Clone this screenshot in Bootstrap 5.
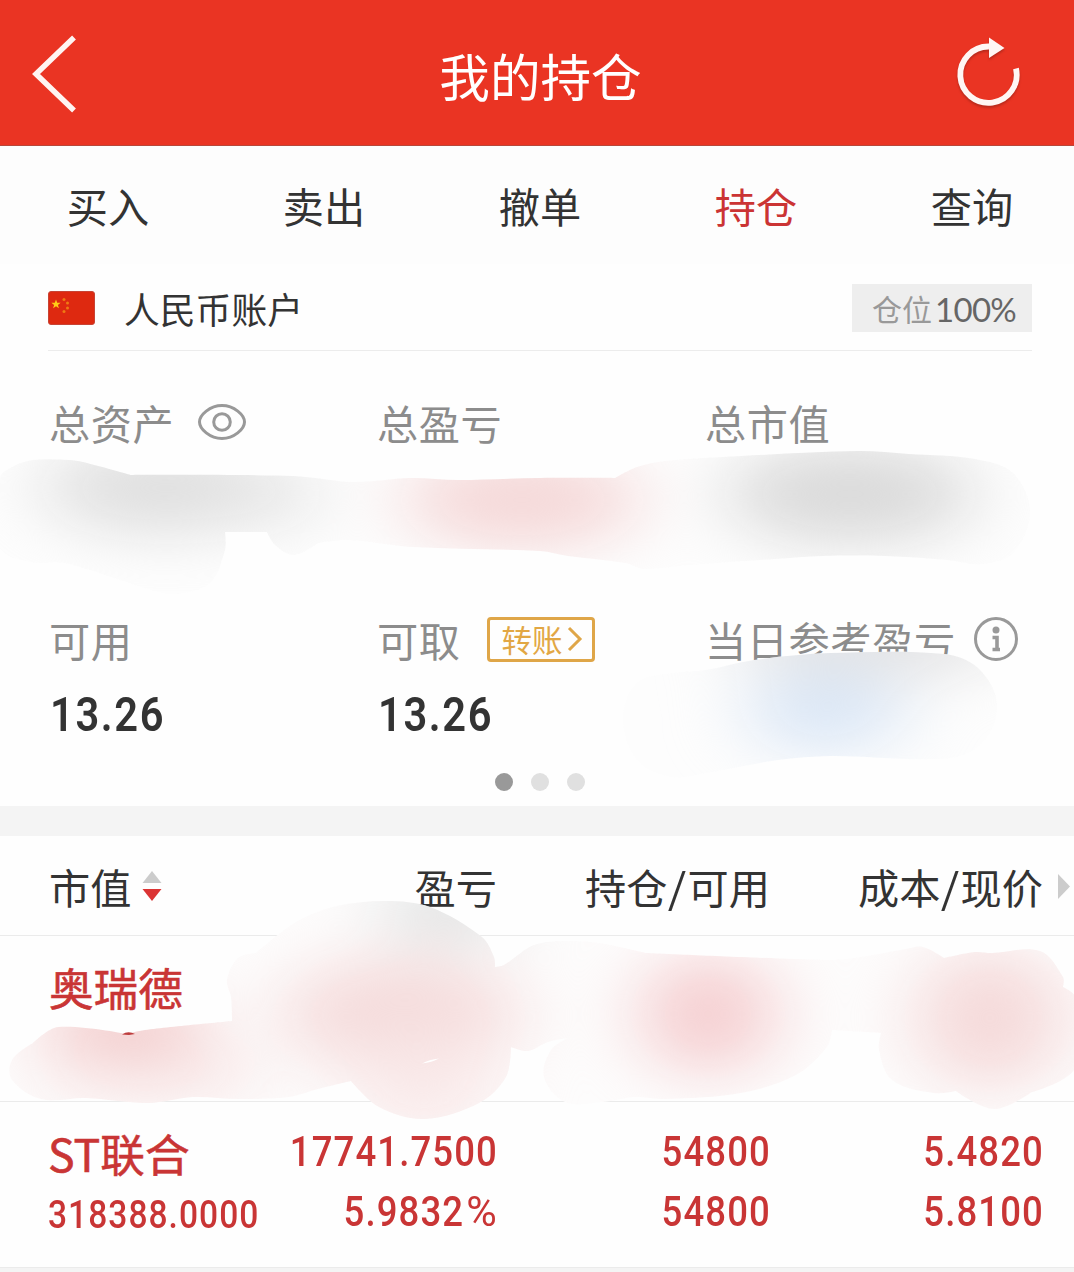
<!DOCTYPE html>
<html lang="zh-CN">
<head>
<meta charset="utf-8">
<meta name="viewport" content="width=device-width, initial-scale=1">
<title>我的持仓</title>
<link href="https://cdn.jsdelivr.net/npm/bootstrap@5.3.0/dist/css/bootstrap.min.css" rel="stylesheet">
<style>
body{font-family:"Noto Sans CJK SC","Noto Sans",sans-serif;background:#fefefe;color:#333;font-size:41.2px;line-height:60px;height:1272px;overflow:hidden}
.topbar{height:146px;background:#ea3423;border-bottom:1px solid #b8473a;padding:0 32px}
.topbar h1{font-size:50.6px;line-height:70px;font-weight:400;padding-left:47px;padding-top:5px}
.tabs{height:118px;background:#fdfdfd;padding-top:29px}
.tabs a{width:216px;flex:none;text-align:center;color:#333;text-decoration:none;padding:0;font-size:41.2px;line-height:60px}
.tabs a.active{color:#cb3434}
.acct{margin:0 42px 0 48px;height:87px;border-bottom:1px solid #ececec;padding-top:1px}
.acct-name{font-size:35.8px;margin-left:29px}
.posratio{background:#eee;width:180px;height:48px;color:#999;font-size:30px;line-height:48px;padding-left:20px}
.posratio b{font:400 33px/50px Lato,sans-serif;color:#666;margin-left:3px;letter-spacing:-.7px}
.assets{margin-left:49px;height:455px;color:#8c8c8c;letter-spacing:.6px}
.cell{width:328px;flex:none}
.cells{height:218px;padding-top:41px}
.cells:nth-child(2){padding-top:40px}
.din{font-family:Roboto,sans-serif;font-weight:500;display:block;white-space:nowrap;transform:scaleX(.85);letter-spacing:1.3px}
.din u{text-decoration:none;font-weight:400;display:inline-block;transform:scaleX(1.14);margin:0 2px 0 5px}
.cash{font-size:49px;color:#333;transform-origin:left;letter-spacing:1.9px;margin-left:1px;margin-top:16px;font-weight:600}
.transfer{width:108px;height:45px;border:3px solid #dfa648;border-radius:4px;color:#e2a744;font-size:30.5px;line-height:39px;letter-spacing:0;margin-left:26px;padding-left:12px}
.dots{margin-top:-14px;margin-right:48px;padding-left:5px}
.dots i{width:18px;height:18px;border-radius:50%;background:#e0e0e0;margin:0 9px}
.dots i:first-child{background:#999}
.band{height:30px;background:#f4f4f4}
.grid4{display:grid;grid-template-columns:230px 219px 273px 273px;padding-left:48px;text-align:right}
.thead{height:100px;border-bottom:1px solid #ebebeb;padding-top:20px;line-height:60px}
.thead s{text-decoration:none;display:inline-block;transform:scale(1.15,1);margin:0 2px}
.hold{height:166px;border-bottom:1px solid #ebebeb;color:#c93535}
.hold .name{font-size:44.6px;text-align:left;line-height:60px;-webkit-text-stroke:.6px #c93535;white-space:nowrap}
.nums{font-size:43px;line-height:60px}
.nums .din{transform-origin:right;margin:0 -1px 0 -60px}
.nums .din.mv{font-size:39.5px;transform-origin:left;letter-spacing:1.2px;line-height:56px;margin:4px 0 0}
.smudge{position:absolute;left:0;top:0;pointer-events:none}
</style>
</head>
<body class="position-relative">
<header class="topbar d-flex align-items-center justify-content-between text-white">
  <svg width="46" height="80" viewBox="0 0 46 80" fill="none" stroke="#fff4f2" stroke-width="5.500"><path d="M42 4.500 4 41l38 36.500"/></svg>
  <h1 class="mb-0">我的持仓</h1>
  <svg width="86" height="80" viewBox="0 0 86 80" class="overflow-visible"><g style="filter:drop-shadow(0 2px 1px #9d2418aa)"><path d="M33 13.500A28.200 28.200 0 1 0 60 35.500" fill="none" stroke="#fff6f4" stroke-width="5.800"/><path d="M33 4.500 48.500 15 33 25z" fill="#fff6f4"/></g></svg>
</header>
<nav class="tabs nav flex-nowrap overflow-hidden">
  <a>买入</a><a>卖出</a><a>撤单</a><a class="active">持仓</a><a>查询</a>
</nav>
<section class="acct d-flex align-items-center">
  <svg width="47" height="34" viewBox="0 0 47 34"><rect x=".5" y=".5" width="46" height="33" rx="2.500" fill="#de2910" stroke="#c74435"/><path d="m8 8.500 1.200 3.300h3.400l-2.700 2.100 1 3.300L8 15.200l-2.900 2 1-3.300-2.700-2.100h3.400z" fill="#ffcd16"/><g fill="#ef7a13"><circle cx="16" cy="8.500" r="1.500"/><circle cx="19.500" cy="12" r="1.500"/><circle cx="19.500" cy="17" r="1.500"/><circle cx="16" cy="20.500" r="1.500"/></g></svg>
  <span class="acct-name">人民币账户</span>
  <div class="posratio ms-auto d-flex">仓位<b>100%</b></div>
</section>
<section class="assets">
  <div class="cells d-flex">
    <div class="cell d-flex align-items-center align-self-start">总资产
      <svg style="margin-left:23px" width="50" height="38" viewBox="0 0 50 38" fill="none" stroke="#999" stroke-width="3"><path d="M2.500 19C2.500 12 13 2.500 25 2.500S47.500 12 47.500 19C47.500 26 37 35.500 25 35.500S2.500 26 2.500 19z"/><circle cx="25" cy="19" r="8.300"/></svg>
    </div>
    <div class="cell">总盈亏</div><div class="cell">总市值</div>
  </div>
  <div class="cells d-flex">
    <div class="cell">可用<div class="din cash">13.26</div></div>
    <div class="cell"><div class="d-flex align-items-center">可取<span class="transfer d-flex align-items-center">转账<svg class="ms-1" width="16" height="26" viewBox="0 0 16 26" fill="none" stroke="#dfa648" stroke-width="3"><path d="m2 2 11 11L2 24"/></svg></span></div><div class="din cash">13.26</div></div>
    <div class="cell d-flex align-self-start align-items-center">当日参考盈亏
      <svg class="flex-shrink-0" style="margin-left:17px" width="46" height="46" viewBox="0 0 46 46"><circle cx="23" cy="23" r="20.500" fill="none" stroke="#999" stroke-width="3"/><circle cx="23" cy="14" r="3.500" fill="#999"/><path d="M19.500 21.500h4.500v12M19.500 33.500h7.500" fill="none" stroke="#999" stroke-width="3.600"/></svg>
    </div>
  </div>
  <div class="dots d-flex justify-content-center"><i></i><i></i><i></i></div>
</section>
<div class="band"></div>
<section>
  <div class="grid4 thead position-relative">
    <div class="text-start d-flex align-items-center" style="height:60px;padding-left:1px">市值<svg style="margin-left:11px" width="20" height="32" viewBox="0 0 20 32"><path d="m10 1 9.500 12H.5z" fill="#ccc"/><path d="m10 31 9.500-12H.5z" fill="#db3434"/></svg></div>
    <div>盈亏</div><div>持仓<s>/</s>可用</div><div>成本<s>/</s>现价</div>
    <svg class="position-absolute" style="right:4px;top:38px" width="12" height="25" viewBox="0 0 12 25"><path d="M0 0 12 12.500 0 25z" fill="#ccc"/></svg>
  </div>
  <div class="grid4 hold"><div class="name" style="padding-top:21px;padding-left:1px">奥瑞德</div></div>
  <div class="grid4 hold nums" style="padding-top:20px">
    <div class="text-start"><div class="name" style="padding-top:1px">ST联合</div><div class="din mv">318388.0000</div></div>
    <div style="margin-top:-1px"><div class="din">17741.7500</div><div class="din">5.9832<u>%</u></div></div>
    <div style="margin-top:-1px"><div class="din">54800</div><div class="din">54800</div></div>
    <div style="margin-top:-1px"><div class="din">5.4820</div><div class="din">5.8100</div></div>
  </div>
  <div class="band"></div>
</section>

<svg class="smudge" width="1074" height="1272" viewBox="0 0 1074 1272">
  <defs>
    <filter id="soft" x="-100%" y="-150%" width="300%" height="400%" color-interpolation-filters="sRGB"><feGaussianBlur stdDeviation="38 28"/></filter>
    <clipPath id="ca"><path data-blob="a"/></clipPath>
    <clipPath id="cb"><path data-blob="b"/></clipPath>
    <clipPath id="cc"><path data-blob="c"/></clipPath>
  </defs>
  <g clip-path="url(#ca)"><rect y="440" width="1074" height="170" fill="#fdfdfd"/>
    <g filter="url(#soft)"><ellipse cx="165" cy="488" rx="125" ry="46" fill="#dfdfdf"/><ellipse cx="270" cy="494" rx="50" ry="34" fill="#e6e6e6"/><ellipse cx="522" cy="500" rx="120" ry="50" fill="#f5d9d9"/><ellipse cx="850" cy="494" rx="125" ry="50" fill="#dadada"/></g></g>
  <g clip-path="url(#cb)"><rect x="600" y="640" width="420" height="150" fill="#fdfdfd"/>
    <g filter="url(#soft)"><ellipse cx="870" cy="638" rx="140" ry="42" fill="#e4e4e5"/><ellipse cx="825" cy="710" rx="80" ry="44" fill="#dbe7f6"/></g></g>
  <g clip-path="url(#cc)"><rect y="890" width="1074" height="240" fill="#fdfcfc"/>
    <g filter="url(#soft)"><ellipse cx="450" cy="908" rx="70" ry="38" fill="#e2e4e4"/><ellipse cx="125" cy="1026" rx="85" ry="28" fill="#f1c4c4"/><ellipse cx="150" cy="1075" rx="110" ry="30" fill="#f8e6e6"/><ellipse cx="400" cy="1014" rx="120" ry="58" fill="#f5dcdc"/><ellipse cx="425" cy="1085" rx="75" ry="50" fill="#f9e9e9"/><ellipse cx="708" cy="1014" rx="68" ry="60" fill="#f5cfd1"/><ellipse cx="990" cy="1018" rx="75" ry="70" fill="#f5dada"/></g></g>
  <path d="M122 1034.500q6-4 13-.5l-6 1z" fill="#bd3d3d"/>
  <path d="M422 1063.500q7-4 17-5-7 4-17 5z" fill="#fff"/>
</svg>
<script src="https://cdn.jsdelivr.net/npm/bootstrap@5.3.0/dist/js/bootstrap.bundle.min.js"></script>
<script>
const blobs={
a:"0,478 12,467 33,460 69,460 83,462 131,475 293,476 353,482 410,478 458,480 540,478 615,478 637,467 665,461 741,456 858,451 909,454 975,459 1013,473 1030,512 1013,553 982,564 947,560 885,556 823,556 775,559 689,565 644,569 625,563 568,556 540,551 413,547 348,540 318,543 294,555 275,545 267,532 225,532 225,550 210,583 176,594 151,590 65,563 31,562 0,547",
b:"623,718 637,683 672,673 706,670 754,660 830,653 944,654 978,668 997,703 985,740 951,758 830,756 778,760 706,773 672,777 637,760",
c:"256,953 296,922 337,906 386,901 430,907 482,937 494,957 495,967 504,965 534,945 568,941 599,943 646,953 827,960 854,958 906,949 923,947 944,958 975,952 992,953 1040,951 1063,977 1063,987 1076,998 1076,1067 1032,1092 994,1109 956,1091 933,1093 892,1080 879,1050 881,1033 832,1030 827,1047 796,1075 741,1093 665,1099 634,1097 603,1102 565,1102 544,1077 551,1050 568,1038 548,1042 528,1051 511,1047 506,1077 479,1103 424,1119 379,1107 351,1081 318,1089 289,1097 238,1099 193,1097 148,1103 86,1098 41,1099 12,1080 12,1060 33,1043 58,1027 127,1034 145,1030 232,1021 231,997 227,980 238,958"};
// Closed curve through every outline point; points in `sharp` keep a hard corner.
const sharp=new Set("131,475 615,478 225,532 267,532 318,543 495,967 646,953 944,958 1063,987 1032,1092 956,1091 881,1033 832,1030 568,1038 511,1047 351,1081 33,1043 127,1034 232,1021 256,953".split(" "));
for(const k in blobs){
  const raw=blobs[k].split(" "),p=raw.map(s=>s.split(",").map(Number)),n=p.length;
  let d="M"+p[0];
  for(let i=0;i<n;i++){
    const a=p[(i+n-1)%n],b=p[i],c=p[(i+1)%n],e=p[(i+2)%n];
    const q=Math.hypot(c[0]-b[0],c[1]-b[1])*.33;
    const u=Math.hypot(c[0]-a[0],c[1]-a[1]),v=Math.hypot(e[0]-b[0],e[1]-b[1]);
    const qb=sharp.has(raw[i])?0:q,qc=sharp.has(raw[(i+1)%n])?0:q;
    d+=`C${b[0]+(c[0]-a[0])/u*qb},${b[1]+(c[1]-a[1])/u*qb} ${c[0]-(e[0]-b[0])/v*qc},${c[1]-(e[1]-b[1])/v*qc} ${c}`;
  }
  document.querySelector(`[data-blob=${k}]`).setAttribute("d",d);
}
</script>
</body>
</html>
